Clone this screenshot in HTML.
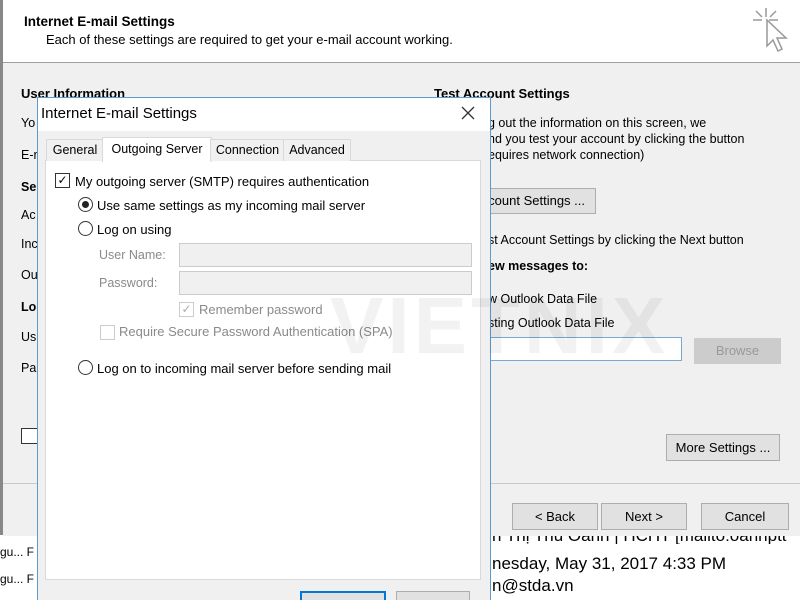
<!DOCTYPE html>
<html style="overflow:hidden"><head><style>
html,body{overflow:hidden}
body{margin:0;width:800px;height:600px;position:relative;background:#fff;font-family:"Liberation Sans",sans-serif;font-size:12.5px;color:#000}
.a{position:absolute;white-space:nowrap}
.btn{position:absolute;background:#e1e1e1;border:1px solid #adadad;box-sizing:border-box;text-align:center;font-size:13px}
.rad{position:absolute;width:13px;height:13px;border:1px solid #333;border-radius:50%;background:#fff}
.g{color:#8a8a8a}
.d{font-size:13px}
</style></head><body>
<div class="a" style="left:0;top:0;width:3px;height:535px;background:#888"></div>
<div class="a" style="left:24px;top:14px;font-weight:bold;font-size:13.5px">Internet E-mail Settings</div>
<div class="a" style="left:46px;top:32px;font-size:13px">Each of these settings are required to get your e-mail account working.</div>
<svg class="a" style="left:750px;top:6px" width="40" height="54" viewBox="0 0 40 54"><g stroke="#999" stroke-width="1.5" fill="none"><path d="M16 2v9M6 5l6 6M3 14h9M26 5l-6 6M28 14h-9"/><path d="M17 14v26l6-6 5 11 4-2-5-11h9z" fill="#fff"/></g></svg>
<div class="a" style="left:3px;top:62px;width:797px;height:421px;background:#f0f0f0;border-top:1px solid #a0a0a0"></div>
<div class="a" style="left:3px;top:483px;width:797px;height:52px;background:#f0f0f0;border-top:1px solid #c8c8c8"></div>
<div class="a" style="left:21px;top:86px;font-weight:bold;font-size:13px">User Information</div>
<div class="a" style="left:21px;top:116px">Yo</div>
<div class="a" style="left:21px;top:148px">E-m</div>
<div class="a" style="left:21px;top:180px;font-weight:bold">Se</div>
<div class="a" style="left:21px;top:208px">Ac</div>
<div class="a" style="left:21px;top:237px">Inc</div>
<div class="a" style="left:21px;top:268px">Ou</div>
<div class="a" style="left:21px;top:300px;font-weight:bold">Lo</div>
<div class="a" style="left:21px;top:330px">Us</div>
<div class="a" style="left:21px;top:361px">Pa</div>
<div class="a" style="left:21px;top:428px;width:16px;height:14px;border:1px solid #333;background:#fff"></div>
<div class="a" style="left:434px;top:86px;font-weight:bold;font-size:13px">Test Account Settings</div>
<div class="a" style="left:488px;top:116px">g out the information on this screen, we</div>
<div class="a" style="left:488px;top:132px">nd you test your account by clicking the button</div>
<div class="a" style="left:488px;top:148px">equires network connection)</div>
<div class="btn" style="left:440px;top:188px;width:156px;height:26px;line-height:24px;text-align:right;padding-right:10px">count Settings ...</div>
<div class="a" style="left:488px;top:233px">st Account Settings by clicking the Next button</div>
<div class="a" style="left:488px;top:259px;font-weight:bold">ew messages to:</div>
<div class="a" style="left:488px;top:292px">w Outlook Data File</div>
<div class="a" style="left:488px;top:316px">sting Outlook Data File</div>
<div class="a" style="left:450px;top:337px;width:230px;height:22px;border:1px solid #7aa7d6;background:#fff"></div>
<div class="btn" style="left:694px;top:338px;width:87px;height:26px;line-height:24px;color:#999;background:#ccc;border-color:#ccc">Browse</div>
<div class="btn" style="left:666px;top:434px;width:114px;height:27px;line-height:25px">More Settings ...</div>
<div class="btn" style="left:512px;top:503px;width:86px;height:27px;line-height:25px">&lt; Back</div>
<div class="btn" style="left:601px;top:503px;width:86px;height:27px;line-height:25px">Next &gt;</div>
<div class="btn" style="left:701px;top:503px;width:88px;height:27px;line-height:25px">Cancel</div>
<div class="a" style="left:0;top:545px;font-size:12px">gu... F</div>
<div class="a" style="left:0;top:572px;font-size:12px">gu... F</div>
<div class="a" style="left:492px;top:536px;width:308px;height:8px;overflow:hidden"><div style="font-size:17px;margin-top:-10px">n Thị Thu Oanh | HCHT [mailto:oanhptt</div></div>
<div class="a" style="left:492px;top:554px;font-size:17px">nesday, May 31, 2017 4:33 PM</div>
<div class="a" style="left:492px;top:576px;font-size:17px">n@stda.vn</div>
<!-- dialog -->
<div class="a" style="left:37px;top:97px;width:452px;height:510px;background:#f0f0f0;border:1px solid #5b9bd5"></div>
<div class="a" style="left:38px;top:98px;width:452px;height:33px;background:#fff"></div>
<div class="a" style="left:41px;top:105px;font-size:15px">Internet E-mail Settings</div>
<svg class="a" style="left:461px;top:106px" width="14" height="14"><path d="M1 1L13 13M13 1L1 13" stroke="#333" stroke-width="1.3"/></svg>
<div class="a" style="left:45px;top:160px;width:434px;height:418px;background:#fff;border:1px solid #d9d9d9"></div>
<div class="a" style="left:46px;top:139px;width:56px;height:21px;border:1px solid #d9d9d9;border-bottom:none;background:#f0f0f0;line-height:21px;text-align:center">General</div>
<div class="a" style="left:102px;top:137px;width:108px;height:24px;border:1px solid #d9d9d9;border-bottom:none;background:#fff;line-height:22px;text-align:center">Outgoing Server</div>
<div class="a" style="left:210px;top:139px;width:73px;height:21px;border:1px solid #d9d9d9;border-bottom:none;background:#f0f0f0;line-height:21px;text-align:center">Connection</div>
<div class="a" style="left:283px;top:139px;width:66px;height:21px;border:1px solid #d9d9d9;border-bottom:none;background:#f0f0f0;line-height:21px;text-align:center">Advanced</div>
<div class="a" style="left:55px;top:173px;width:13px;height:13px;border:1px solid #333;font-size:12px;line-height:13px;text-align:center">✓</div>
<div class="a d" style="left:75px;top:174px">My outgoing server (SMTP) requires authentication</div>
<div class="rad" style="left:78px;top:197px"><div style="margin:3px;width:7px;height:7px;border-radius:50%;background:#222"></div></div>
<div class="a d" style="left:97px;top:198px">Use same settings as my incoming mail server</div>
<div class="rad" style="left:78px;top:221px"></div>
<div class="a d" style="left:97px;top:222px">Log on using</div>
<div class="a g" style="left:99px;top:248px">User Name:</div>
<div class="a" style="left:179px;top:243px;width:291px;height:22px;border:1px solid #ccc;background:#f0f0f0"></div>
<div class="a g" style="left:99px;top:276px">Password:</div>
<div class="a" style="left:179px;top:271px;width:291px;height:22px;border:1px solid #ccc;background:#f0f0f0"></div>
<div class="a g" style="left:179px;top:302px;width:13px;height:13px;border:1px solid #ccc;font-size:12px;line-height:13px;text-align:center;color:#aaa">✓</div>
<div class="a g d" style="left:199px;top:302px">Remember password</div>
<div class="a" style="left:100px;top:325px;width:13px;height:13px;border:1px solid #ccc"></div>
<div class="a g d" style="left:119px;top:324px">Require Secure Password Authentication (SPA)</div>
<div class="rad" style="left:78px;top:360px"></div>
<div class="a d" style="left:97px;top:361px">Log on to incoming mail server before sending mail</div>
<div class="a" style="left:300px;top:591px;width:82px;height:20px;border:2px solid #0078d7;background:#e1e1e1"></div>
<div class="a" style="left:396px;top:591px;width:72px;height:20px;border:1px solid #adadad;background:#e1e1e1"></div>
<div class="a" style="left:330px;top:280px;font-size:80px;font-weight:bold;color:rgba(0,0,0,0.05);letter-spacing:4px">VIETNIX</div>
</body></html>
